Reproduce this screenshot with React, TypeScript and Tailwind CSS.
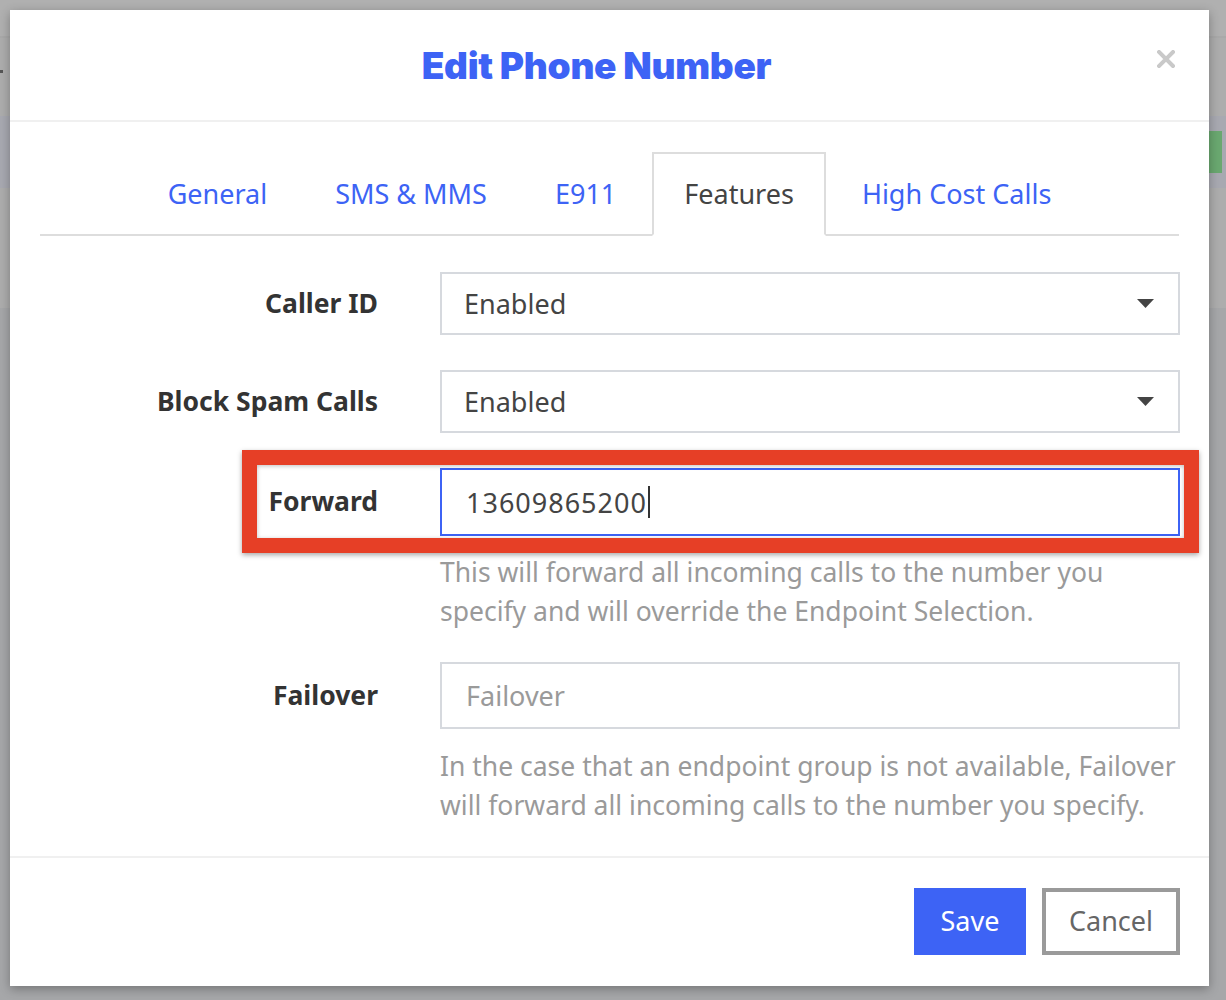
import React from "react";

function SelectBox({ value }: { value: string }) {
  return (
    <div className="flex h-[63px] w-full items-center justify-between border-2 border-[#d6d9de] bg-white pl-[22px] pr-[24px]">
      <span className="text-[27px] leading-none text-[#444]">{value}</span>
      <svg width="17" height="9" viewBox="0 0 17 9" className="block">
        <polygon points="0,0 17,0 8.5,9" fill="#444" />
      </svg>
    </div>
  );
}

export default function App() {
  const tabs = ["General", "SMS & MMS", "E911", "Features", "High Cost Calls"];
  return (
    <div className="relative h-[1000px] w-full overflow-hidden bg-[#a6a7a9] font-['Noto_Sans',sans-serif]">
      {/* backdrop page (dimmed) */}
      <div className="flex flex-col">
        <div className="h-[38px] border-b-2 border-[#a9a9a9] bg-[#b0b0b0]" />
        <div className="relative h-[78px] bg-[#adadad]">
          <div className="absolute left-0 top-[32px] h-[3px] w-[3px] bg-[#555]" />
        </div>
        <div className="flex h-[72px] items-center justify-end bg-[#a8a9b1] pr-[4px]">
          <div className="h-[42px] w-[14px] bg-[#6aa870]" />
        </div>
        <div className="h-[120px] bg-[#adadad]" />
      </div>

      {/* modal */}
      <div className="absolute left-[10px] top-[10px] flex w-[1199px] flex-col bg-white shadow-[0_3px_10px_rgba(0,0,0,0.3)]">
        <div className="relative flex h-[112px] items-center justify-center border-b-2 border-[#f0f0f0]">
          <h1 className="pr-[26px] font-['Inter',sans-serif] text-[37px] font-black leading-none tracking-[-0.3px] text-[#3d63f5]">
            Edit Phone Number
          </h1>
          <svg
            width="18"
            height="18"
            viewBox="0 0 18 18"
            className="absolute right-[34px] top-[40px]"
          >
            <path d="M2 2 L16 16 M16 2 L2 16" stroke="#c9c9c9" strokeWidth="4" strokeLinecap="square" />
          </svg>
        </div>

        <div className="relative flex flex-col px-[30px] pb-[31px] pt-[30px]">
          <div className="flex justify-center gap-[4px] border-b-2 border-[#dddddd]">
            {tabs.map((t) => {
              const active = t === "Features";
              return (
                <div
                  key={t}
                  className={
                    active
                      ? "-mb-[2px] flex h-[84px] items-center border-2 border-[#dddddd] border-b-white bg-white px-[30px] text-[27px] text-[#444]"
                      : "-mb-[2px] flex h-[84px] items-center border-2 border-transparent px-[30px] text-[27px] text-[#3d63f5]"
                  }
                >
                  {t}
                </div>
              );
            })}
          </div>

          <div className="mt-[36px] grid grid-cols-[338px_740px] items-center gap-x-[62px]">
            <div className="text-right text-[26.5px] font-bold text-[#333]">Caller ID</div>
            <SelectBox value="Enabled" />
          </div>

          <div className="mt-[35px] grid grid-cols-[338px_740px] items-center gap-x-[62px]">
            <div className="text-right text-[26.5px] font-bold text-[#333]">Block Spam Calls</div>
            <SelectBox value="Enabled" />
          </div>

          <div className="mt-[35px] grid grid-cols-[338px_740px] items-center gap-x-[62px]">
            <div className="text-right text-[26.5px] font-bold text-[#333]">Forward</div>
            <div className="flex h-[68px] w-full items-center border-2 border-[#3d63f5] bg-white pl-[24px]">
              <span className="text-[27px] leading-none tracking-[1px] text-[#444]">13609865200</span>
              <span className="ml-[1px] h-[32px] w-[2px] bg-[#333]" />
            </div>
          </div>
          <div className="mt-[17px] grid grid-cols-[338px_740px] gap-x-[62px]">
            <div />
            <p className="text-[26.5px] leading-[39px] text-[#9a9a9a]">
              This will forward all incoming calls to the number you
              <br />
              specify and will override the Endpoint Selection.
            </p>
          </div>

          <div className="mt-[31px] grid grid-cols-[338px_740px] items-center gap-x-[62px]">
            <div className="text-right text-[26.5px] font-bold text-[#333]">Failover</div>
            <div className="flex h-[67px] w-full items-center border-2 border-[#d6d9de] bg-white pl-[24px]">
              <span className="text-[27px] leading-none text-[#9a9a9a]">Failover</span>
            </div>
          </div>
          <div className="mt-[18px] grid grid-cols-[338px_740px] gap-x-[62px]">
            <div />
            <p className="text-[26.5px] leading-[39px] text-[#9a9a9a]">
              In the case that an endpoint group is not available, Failover
              <br />
              will forward all incoming calls to the number you specify.
            </p>
          </div>

          {/* annotation frame */}
          <div className="pointer-events-none absolute left-[232px] top-[328px] h-[103px] w-[957px] border-[15px] border-[#e63f26] shadow-[0_2px_5px_rgba(0,0,0,0.35),inset_0_1px_4px_rgba(0,0,0,0.25)]" />
        </div>

        <div className="flex justify-end gap-[16px] border-t-2 border-[#f0f0f0] pb-[31px] pl-[30px] pr-[29px] pt-[30px]">
          <button className="flex h-[67px] w-[112px] items-center justify-center bg-[#3d63f5] text-[27px] text-white">
            Save
          </button>
          <button className="flex h-[67px] w-[138px] items-center justify-center border-4 border-[#9a9a9a] bg-white text-[27px] text-[#666]">
            Cancel
          </button>
        </div>
      </div>
    </div>
  );
}
